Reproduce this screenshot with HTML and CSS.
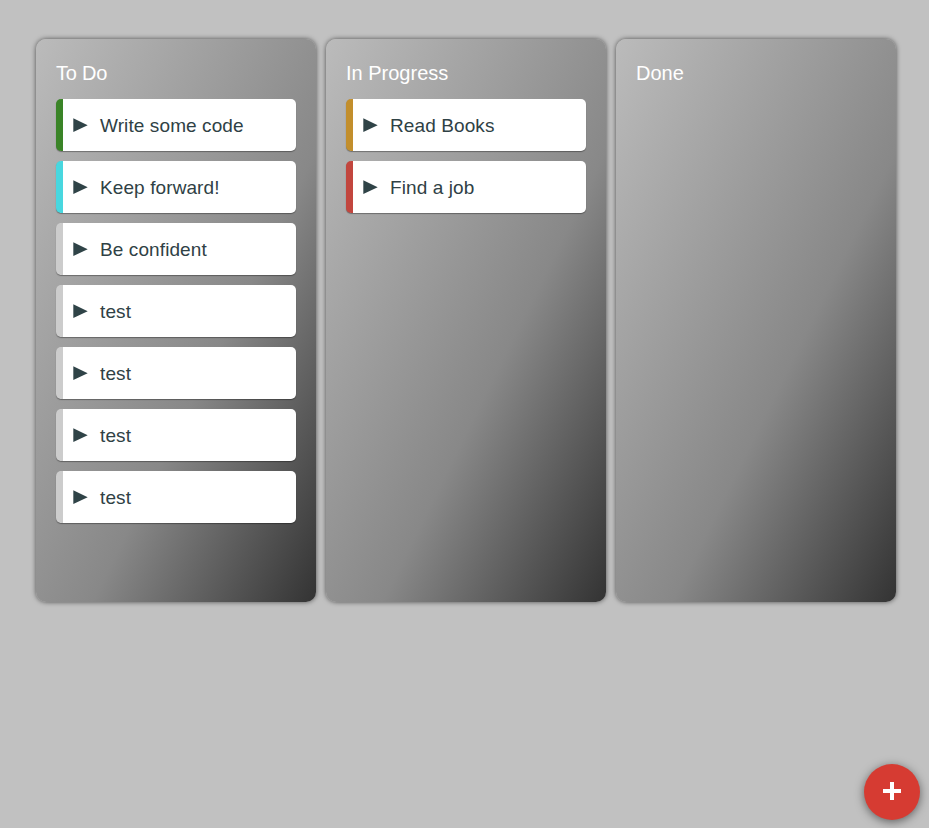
FILE: index.html
```html
<!DOCTYPE html>
<html lang="en">
<head>
<meta charset="utf-8">
<title>Task board</title>
<link rel="stylesheet" href="styles.css">
</head>
<body>
<main class="board">
<section class="column">
<h2 class="tight">To Do</h2>
<div class="card green"><svg class="arrow" viewBox="0 0 15 14"><path d="M0.3 0.3L14.7 7.3L0.3 14Z"/></svg><span>Write some code</span></div>
<div class="card cyan"><svg class="arrow" viewBox="0 0 15 14"><path d="M0.3 0.3L14.7 7.3L0.3 14Z"/></svg><span>Keep forward!</span></div>
<div class="card"><svg class="arrow" viewBox="0 0 15 14"><path d="M0.3 0.3L14.7 7.3L0.3 14Z"/></svg><span>Be confident</span></div>
<div class="card"><svg class="arrow" viewBox="0 0 15 14"><path d="M0.3 0.3L14.7 7.3L0.3 14Z"/></svg><span>test</span></div>
<div class="card"><svg class="arrow" viewBox="0 0 15 14"><path d="M0.3 0.3L14.7 7.3L0.3 14Z"/></svg><span>test</span></div>
<div class="card"><svg class="arrow" viewBox="0 0 15 14"><path d="M0.3 0.3L14.7 7.3L0.3 14Z"/></svg><span>test</span></div>
<div class="card"><svg class="arrow" viewBox="0 0 15 14"><path d="M0.3 0.3L14.7 7.3L0.3 14Z"/></svg><span>test</span></div>
</section>
<section class="column">
<h2>In Progress</h2>
<div class="card amber"><svg class="arrow" viewBox="0 0 15 14"><path d="M0.3 0.3L14.7 7.3L0.3 14Z"/></svg><span>Read Books</span></div>
<div class="card red"><svg class="arrow" viewBox="0 0 15 14"><path d="M0.3 0.3L14.7 7.3L0.3 14Z"/></svg><span>Find a job</span></div>
</section>
<section class="column">
<h2>Done</h2>
</section>
</main>
<button class="add" aria-label="Add task"><svg viewBox="0 0 20 20"><path d="M10 1V19M1 10H19"/></svg></button>
</body>
</html>
```
FILE: styles.css
```css
* { box-sizing: border-box; }
body {
  margin: 0;
  min-height: 828px;
  background: #c1c1c1;
  font-family: "Liberation Sans", Arial, sans-serif;
}
.board {
  display: flex;
  gap: 10px;
  padding: 39px 0 0 36px;
}
.column {
  display: flex;
  flex-direction: column;
  gap: 10px;
  width: 280px;
  height: 563px;
  padding: 20px;
  border-radius: 10px;
  background: linear-gradient(to bottom right, #bbb 0%, #888 60%, #333 100%);
  box-shadow: 0 0 5px rgba(0, 0, 0, .6);
}
.column h2 {
  margin: 0;
  height: 30px;
  color: #fff;
  font-size: 20px;
  font-weight: 400;
  line-height: 28px;
}
.column .tight { letter-spacing: -.2px; }
.card {
  display: flex;
  align-items: center;
  flex: none;
  height: 52px;
  padding-left: 10px;
  border-left: 7px solid #ccc;
  border-radius: 5px;
  background: #fff;
  box-shadow: 0 1px 1px rgba(0, 0, 0, .35);
  color: #2f4145;
  font-size: 19px;
  letter-spacing: .1px;
}
.card span { padding-top: 1px; }
.green { border-color: #3a8427; }
.cyan { border-color: #48d7df; }
.amber { border-color: #c28e2c; }
.red { border-color: #c2463e; }
.arrow {
  width: 15px;
  height: 14px;
  margin-right: 12px;
  fill: #2f4347;
}
.add {
  position: fixed;
  right: 9px;
  bottom: 8px;
  display: grid;
  place-items: center;
  width: 56px;
  height: 56px;
  padding: 0 0 2px;
  border: 0;
  border-radius: 50%;
  background: #d63b32;
  box-shadow: 0 2px 10px rgba(0, 0, 0, .5);
}
.add svg {
  width: 20px;
  height: 20px;
  fill: none;
  stroke: #fff;
  stroke-width: 4;
}
```
